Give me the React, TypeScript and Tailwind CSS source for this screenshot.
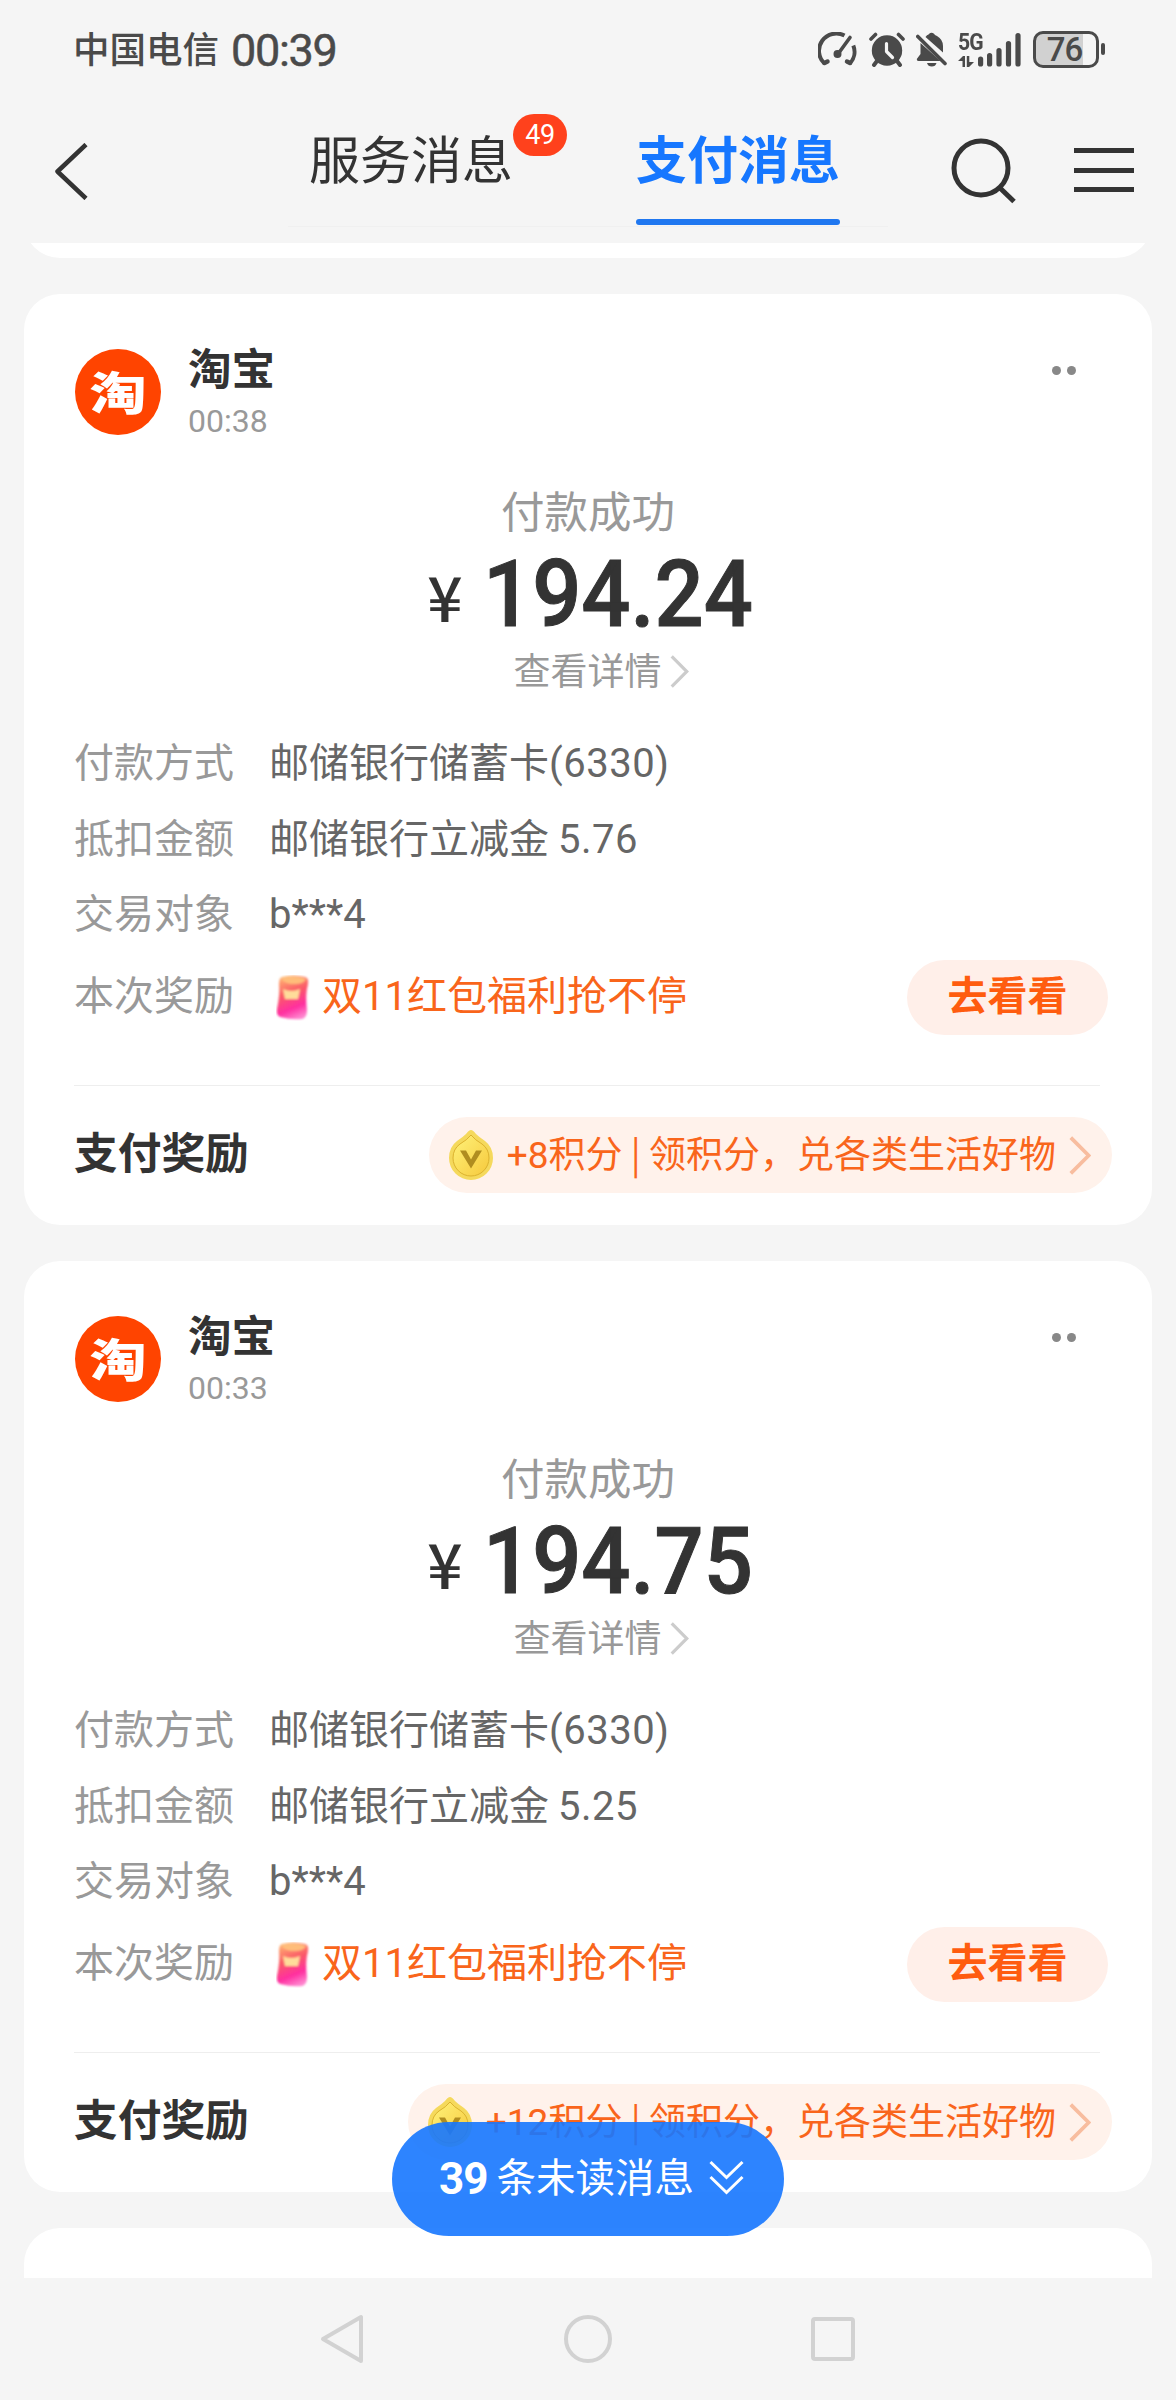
import type { ReactNode } from "react";

type Payment = {
  time: string;
  amount: string;
  discount: string;
  points: number;
};

const PAYMENTS: Payment[] = [
  { time: "00:38", amount: "194.24", discount: "5.76", points: 8 },
  { time: "00:33", amount: "194.75", discount: "5.25", points: 12 },
];

// Digits and latin letters use Roboto, sharing the baseline of the CJK text around them.
function Latin({ children }: { children: ReactNode }) {
  return <span className="font-[family-name:Roboto,sans-serif] leading-none">{children}</span>;
}

function StatusBar() {
  return (
    <div className="flex h-[98px] items-center justify-between pl-[73px] pr-[71px] text-[#4a4a4a]">
      <div className="flex items-center">
        <span className="-mt-[3px] text-[36.500px] leading-[44px] font-medium">中国电信</span>
        <span className="ml-[12px] mt-[4px] font-[family-name:Roboto,sans-serif] text-[45px] leading-[50px] tracking-[-1.300px] [-webkit-text-stroke:0.500px_#4a4a4a]">
          00:39
        </span>
      </div>
      <div className="flex items-center">
        <svg width="39" height="35" viewBox="0 0 39 35" fill="none" stroke="currentColor" strokeLinecap="round">
          <path d="M6.500 31.500A17.300 17.300 0 0 1 26.500 3.600" strokeWidth="4" strokeLinecap="butt" />
          <path d="M35.300 13.500A17.300 17.300 0 0 1 32 31.500" strokeWidth="4" strokeLinecap="butt" />
          <path d="M6.500 31l3-1.500M32 31l-3-1.500" strokeWidth="4.500" />
          <path d="M32 5.500L20 22" strokeWidth="3.600" />
          <circle cx="19.500" cy="22" r="3" fill="currentColor" strokeWidth="2" />
        </svg>
        <svg className="ml-[12px]" width="36" height="35" viewBox="0 0 36 35" fill="none" stroke="currentColor" strokeLinecap="round">
          <circle cx="18" cy="18.500" r="15.200" fill="currentColor" stroke="none" />
          <path d="M2 7L6.500 2.500M34 7L29.500 2.500" strokeWidth="3.600" />
          <path d="M8 29l-3 4M28 29l3 4" strokeWidth="4" />
          <path d="M17.500 11.500v8l6 6" stroke="#f5f5f5" strokeWidth="3.200" strokeLinejoin="round" />
        </svg>
        <svg className="ml-[11px]" width="31" height="35" viewBox="0 0 31 35" fill="currentColor">
          <path d="M11 3.200Q13 2.600 13.200 1.800Q15.500-.4 18 1.800Q18.500 3 21 4Q27 7.500 27 14v6.500L9.500 5z" />
          <path d="M4.500 11L24.500 29H2.500Q.5 29 .8 27L4.500 22z" />
          <path d="M1.800 4.500L29 31.500" stroke="currentColor" strokeWidth="3.600" strokeLinecap="round" />
          <path d="M11 31h9.500Q19.500 34.500 15.800 34.500Q12 34.500 11 31z" />
        </svg>
        <div className="ml-[11px] flex h-[35px] items-end">
          <div className="flex h-[35px] w-[24px] flex-col justify-between">
            <span className="origin-left scale-x-[0.880] font-[family-name:Roboto,sans-serif] text-[24px] leading-[20px] font-bold tracking-[-1px]">5G</span>
            <svg width="16" height="11" viewBox="0 0 16 11" fill="currentColor">
              <path d="M0 5L5 0h2v11H4.500V5zM8.800 0h2.500v6H16l-5 5H8.800z" />
            </svg>
          </div>
          <svg className="-ml-[4px]" width="43" height="35" viewBox="0 0 43 35" stroke="currentColor" strokeWidth="5.200" strokeLinecap="round">
            <path d="M2.600 27v5M11.600 23.500v8.500M21 18.500v13.500M30.500 11.500v20.500M40 3.500v28.500" />
          </svg>
        </div>
        <div className="ml-[12px] flex h-[37px] w-[66px] items-center rounded-[10px] border-[3px] border-[#4a4a4a] bg-linear-to-r from-[#d1d1d1] from-78% to-[#f5f5f5] to-78%">
          <span className="w-[57px] text-center font-[family-name:Roboto,sans-serif] text-[33px] leading-[31px] font-medium tracking-[-1px]">
            76
          </span>
        </div>
        <div className="ml-[2px] -mt-[1px] h-[12px] w-[4px] rounded-full bg-[#4a4a4a]" />
      </div>
    </div>
  );
}

function NavHeader() {
  return (
    <div className="flex h-[145px] items-start pl-[54px] pr-[42px]">
      <svg className="mt-[45px]" width="34" height="57" viewBox="0 0 34 57" fill="none" stroke="#333" strokeWidth="4.500">
        <path d="M32 1.500L3.500 28.500L32 55.500" strokeLinejoin="round" />
      </svg>
      <div className="ml-[200px] flex h-[129px] w-[600px] border-b border-[#f0f0f0] pl-[21px]">
        <div className="relative h-full w-[204px] pt-[29px] text-[51px] leading-[60px] text-[#333] whitespace-nowrap">
          服务消息
          <span className="absolute left-[204px] top-[16px] flex h-[42px] w-[54px] items-center justify-center rounded-full bg-[#ff411c] font-[family-name:Roboto,sans-serif] text-[27px] leading-none tracking-[-0.500px] text-white">
            49
          </span>
        </div>
        <div className="ml-[123px] flex h-full w-[204px] flex-col justify-between pt-[29px] pb-px text-[51px] leading-[60px] font-bold text-[#1677ff] whitespace-nowrap">
          支付消息
          <div className="h-[6px] rounded-full bg-[#1f77f0]" />
        </div>
      </div>
      <svg className="ml-[63px] mt-[40px]" width="66" height="66" viewBox="0 0 66 66" fill="none" stroke="#333" strokeWidth="5">
        <circle cx="30" cy="30" r="27" />
        <path d="M49 50L63 63.500" />
      </svg>
      <div className="ml-[57px] mt-[50px] flex h-[44px] w-[60px] flex-col justify-between">
        <div className="h-[5px] bg-[#333]" />
        <div className="h-[5px] bg-[#333]" />
        <div className="h-[5px] bg-[#333]" />
      </div>
    </div>
  );
}

function EnvelopeIcon() {
  return (
    <svg width="34" height="46" viewBox="0 0 34 46">
      <defs>
        <linearGradient id="envelope" x1="0.300" y1="0" x2="0.600" y2="1">
          <stop offset="0" stopColor="#ffb070" />
          <stop offset="0.400" stopColor="#fb5a68" />
          <stop offset="0.750" stopColor="#ff2fa0" />
          <stop offset="1" stopColor="#ff86cf" />
        </linearGradient>
        <filter id="soften" x="-10%" y="-10%" width="120%" height="120%">
          <feGaussianBlur stdDeviation="0.900" />
        </filter>
      </defs>
      <g filter="url(#soften)">
        <path d="M6 2Q17-1 29 2Q33 3 32 9Q29 20 31 35Q31 43 26 44Q15 45 4 42Q0 40 1 34Q4 20 3 9Q3 3 6 2z" fill="url(#envelope)" />
        <path d="M5 3Q17-1 30 4Q28 9 18 9Q8 9 5 3z" fill="#ffbd7a" />
        <path d="M7 14Q15 18 24 14L22 24H9z" fill="#ffdc9a" />
      </g>
    </svg>
  );
}

function CoinIcon() {
  return (
    <svg width="46" height="52" viewBox="0 0 46 52">
      <defs>
        <linearGradient id="coin" x1="0" y1="0" x2="1" y2="1">
          <stop offset="0" stopColor="#fff27a" />
          <stop offset="1" stopColor="#f6c93c" />
        </linearGradient>
      </defs>
      <path d="M23 1Q25 1 28 5Q31 8 37 12Q45 18 45 29A22 22 0 0 1 1 29Q1 18 9 12Q15 8 18 5Q21 1 23 1z" fill="#f5d95c" />
      <path d="M23 6Q27 11 34 15Q41 20 41 29A18 18 0 0 1 5 29Q5 20 12 15Q19 11 23 6z" fill="url(#coin)" stroke="#dcb22e" />
      <path d="M12 21.500h6l5 9l5-9h6L23 39.500z" fill="#b08d20" />
    </svg>
  );
}

function Chevron({ className }: { className: string }) {
  return (
    <svg className={className} viewBox="0 0 20 36" fill="none" stroke="currentColor" strokeWidth="3.500">
      <path d="M1.500 1.500L18 18L1.500 34.500" />
    </svg>
  );
}

function Row({ label, children }: { label: string; children: ReactNode }) {
  return (
    <div className="flex h-[75.500px] items-center text-[40px] leading-[48px] whitespace-nowrap">
      <span className="w-[195px] text-[#999]">{label}</span>
      <span className="text-[#666]">{children}</span>
    </div>
  );
}

function PaymentCard({ payment }: { payment: Payment }) {
  return (
    <article className="h-[931px] rounded-[36px] bg-white pl-[50px] pr-[40px]">
      <div className="flex h-[191px]">
        <div className="ml-px mt-[55px] flex size-[86px] items-center justify-center rounded-full bg-[#ff4400]">
          <span className="-mt-[3px] scale-y-[0.800] text-[57px] leading-none font-black text-white">淘</span>
        </div>
        <div className="ml-[27px] flex flex-1 flex-col pt-[49px]">
          <span className="text-[43.500px] leading-[48px] font-bold text-[#333]">淘宝</span>
          <span className="mt-[12px] font-[family-name:Roboto,sans-serif] text-[32px] leading-[36px] text-[#999]">{payment.time}</span>
        </div>
        <div className="mr-[36px] mt-[72px] flex gap-[6px]">
          <span className="size-[9px] rounded-full bg-[#888]" />
          <span className="size-[9px] rounded-full bg-[#888]" />
        </div>
      </div>

      <div className="mr-[10px] flex h-[237.500px] flex-col items-center">
        <span className="text-[43.500px] leading-[50px] text-[#999]">付款成功</span>
        <div className="mt-[15px] flex h-[90px] items-baseline font-medium text-[#333]">
          <span className="relative -top-[4px] mr-[20px] text-[62px] leading-none">¥</span>
          <span className="-mr-[21px] origin-left scale-x-[0.940] font-[family-name:Roboto,sans-serif] text-[92px] leading-[90px] [-webkit-text-stroke:1px_#333]">
            {payment.amount}
          </span>
        </div>
        <div className="mt-[7px] flex items-center pl-[26px] text-[#999]">
          <span className="text-[37px] leading-[44px]">查看详情</span>
          <Chevron className="ml-[8px] mt-[5px] h-[33px] w-[19px] text-[#ccc]" />
        </div>
      </div>

      <Row label="付款方式">
        邮储银行储蓄卡<span className="tracking-[0.500px]"><Latin>(6330)</Latin></span>
      </Row>
      <Row label="抵扣金额">
        邮储银行立减金 <span className="tracking-[0.500px]"><Latin>{payment.discount}</Latin></span>
      </Row>
      <Row label="交易对象">
        <Latin>b***4</Latin>
      </Row>

      <div className="mt-[11px] flex h-[75px] items-center text-[40px] leading-[48px] whitespace-nowrap">
        <span className="-mt-[9px] w-[202px] text-[#999]">本次奖励</span>
        <EnvelopeIcon />
        <span className="-mt-[9px] ml-[12px] text-[#f9651b]">
          双<Latin>11</Latin>红包福利抢不停
        </span>
        <button className="ml-auto mr-[4px] h-[75px] w-[201px] rounded-full bg-[#ffefe9] pb-[9px] font-bold text-[#ff5c0f]">去看看</button>
      </div>

      <div className="mt-[50px] mr-[12px] h-px bg-[#eee]" />

      <div className="mt-[31px] flex h-[76px] items-center justify-between whitespace-nowrap">
        <span className="-mt-[10px] text-[43.700px] leading-[48px] font-bold text-[#333]">支付奖励</span>
        <div className="flex h-[76px] items-center rounded-full bg-[#fff2eb] pl-[19px] pr-[21px] text-[37px] leading-[44px] text-[#f9651b]">
          <CoinIcon />
          <span className="-mt-[6px] ml-[13px]">
            <Latin>+{payment.points}</Latin>积分 | 领积分，兑各类生活好物
          </span>
          <Chevron className="ml-[13px] h-[39px] w-[22px] text-[#f8bd9f]" />
        </div>
      </div>
    </article>
  );
}

function UnreadButton() {
  return (
    <button className="absolute left-[392px] top-[2122px] flex h-[114px] w-[392px] items-center justify-center rounded-full bg-[#1677ff]/90 pb-[3px] pl-[7px] text-[39.500px] leading-[48px] text-white whitespace-nowrap">
      <span className="mt-[2px] font-[family-name:Roboto,sans-serif] text-[44px] font-bold tracking-[-1px]">39</span>
      <span className="ml-[9px] -mt-[5px]">条未读消息</span>
      <svg className="ml-[15px]" width="35" height="36" viewBox="0 0 35 36" fill="none" stroke="white" strokeWidth="3">
        <path d="M1.500 2L17.500 17.500L33.500 2M1.500 17L17.500 32.500L33.500 17" />
      </svg>
    </button>
  );
}

function SystemNav() {
  return (
    <div className="flex h-[122px] items-center justify-center gap-[199px] pr-[2px]">
      <svg width="45" height="50" viewBox="0 0 45 50" fill="none" stroke="#d2d2d2" strokeWidth="4" strokeLinejoin="round">
        <path d="M41 3V47L3 25z" />
      </svg>
      <div className="size-[48px] rounded-full border-4 border-[#d2d2d2]" />
      <div className="size-[44px] rounded-[4px] border-4 border-[#d2d2d2]" />
    </div>
  );
}

export default function App() {
  return (
    <div className="relative flex h-[2400px] w-[1176px] flex-col overflow-hidden bg-[#f5f5f5] font-[family-name:'Noto_Sans_CJK_SC',sans-serif]">
      <StatusBar />
      <NavHeader />
      <main className="flex h-[2035px] flex-col justify-end gap-[36px] overflow-hidden px-[24px]">
        <div className="h-[300px] shrink-0 rounded-[36px] bg-white" />
        {PAYMENTS.map((payment) => (
          <div key={payment.time} className="shrink-0">
            <PaymentCard payment={payment} />
          </div>
        ))}
        <div className="h-[50px] shrink-0 rounded-t-[36px] bg-white" />
      </main>
      <SystemNav />
      <UnreadButton />
    </div>
  );
}
